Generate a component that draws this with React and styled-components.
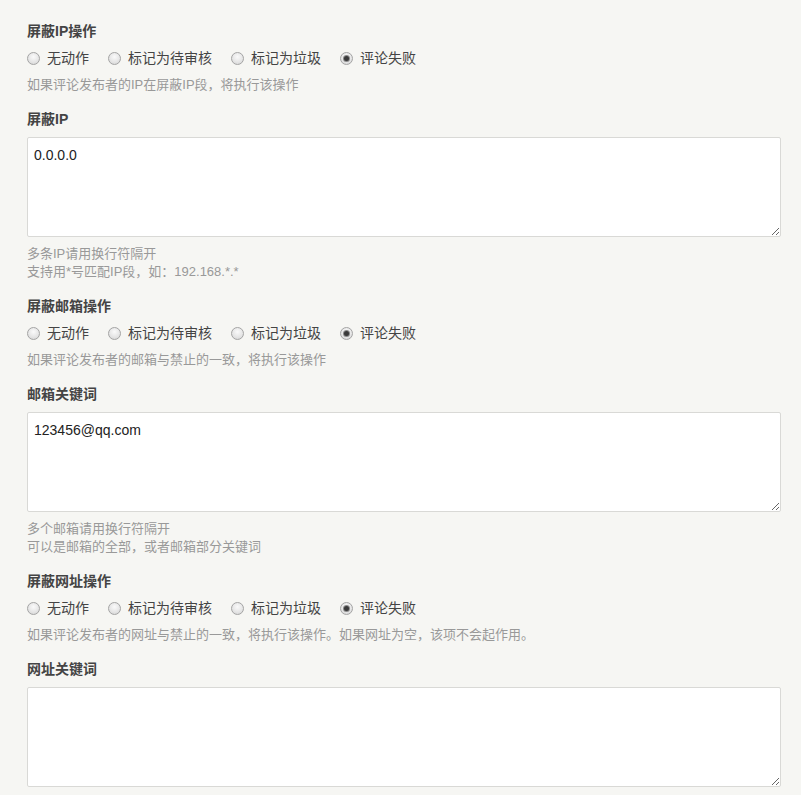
import React from 'react'
import styled, { createGlobalStyle } from 'styled-components'

const GlobalStyle = createGlobalStyle`
  html, body {
    margin: 0;
    padding: 0;
    background: #f6f6f3;
  }
  body {
    font-family: "Liberation Sans", "Noto Sans CJK SC", sans-serif;
    font-size: 14px;
    color: #444;
  }
`

const Page = styled.div`
  padding: 21px 20px 0 27px;
  display: flex;
  flex-direction: column;
  gap: 15px;
`

const Option = styled.div`
  display: flex;
  flex-direction: column;
`

const Label = styled.label`
  display: block;
  font-weight: bold;
  font-size: 14px;
  line-height: 20px;
  color: #444;
  margin-bottom: ${props => (props.field ? '8px' : '7px')};
`

const RadioRow = styled.div`
  display: flex;
  align-items: center;
  height: 20px;
`

const RadioItem = styled.label`
  display: flex;
  align-items: center;
  margin-right: 19px;
  font-size: 14px;
  line-height: 20px;
  color: #444;
`

const RadioInput = styled.input.attrs({ type: 'radio' })`
  appearance: none;
  -webkit-appearance: none;
  width: 13px;
  height: 13px;
  margin: 0 7px 0 0;
  border-radius: 50%;
  border: 1px solid #a4a4a4;
  background: radial-gradient(circle at 50% 35%, #fafafa 0%, #e6e6e6 55%, #d2d2d2 100%);
  box-sizing: border-box;
  position: relative;
  &:checked::after {
    content: '';
    position: absolute;
    left: 3px;
    top: 3px;
    width: 5px;
    height: 5px;
    border-radius: 50%;
    background: #3a3a3a;
    box-shadow: 0 0 0 1px #8a8a8a;
  }
`

const Description = styled.p`
  margin: 8px 0 0;
  font-size: 13px;
  line-height: 18px;
  color: #999;
`

const TextArea = styled.textarea`
  display: block;
  width: 754px;
  height: 100px;
  box-sizing: border-box;
  padding: 7px 6px;
  margin: 0;
  border: 1px solid #d9d9d6;
  border-radius: 2px;
  background: #fff;
  font-family: "Liberation Sans", "Noto Sans CJK SC", sans-serif;
  font-size: 14px;
  line-height: 20px;
  color: #222;
  outline: none;
  resize: vertical;
`

const actions = ['无动作', '标记为待审核', '标记为垃圾', '评论失败']

function ActionOption({ name, title, description }) {
  return (
    <Option>
      <Label>{title}</Label>
      <RadioRow>
        {actions.map((a, i) => (
          <RadioItem key={a}>
            <RadioInput name={name} defaultChecked={i === 3} />
            {a}
          </RadioItem>
        ))}
      </RadioRow>
      <Description>{description}</Description>
    </Option>
  )
}

function FieldOption({ title, value, notes }) {
  return (
    <Option>
      <Label field>{title}</Label>
      <TextArea defaultValue={value} />
      {notes && (
        <Description>
          {notes.map((n, i) => (
            <React.Fragment key={i}>
              {i > 0 && <br />}
              {n}
            </React.Fragment>
          ))}
        </Description>
      )}
    </Option>
  )
}

export default function App() {
  return (
    <>
      <GlobalStyle />
      <Page>
        <ActionOption
          name="ip"
          title="屏蔽IP操作"
          description="如果评论发布者的IP在屏蔽IP段，将执行该操作"
        />
        <FieldOption
          title="屏蔽IP"
          value="0.0.0.0"
          notes={['多条IP请用换行符隔开', '支持用*号匹配IP段，如：192.168.*.*']}
        />
        <ActionOption
          name="mail"
          title="屏蔽邮箱操作"
          description="如果评论发布者的邮箱与禁止的一致，将执行该操作"
        />
        <FieldOption
          title="邮箱关键词"
          value="123456@qq.com"
          notes={['多个邮箱请用换行符隔开', '可以是邮箱的全部，或者邮箱部分关键词']}
        />
        <ActionOption
          name="url"
          title="屏蔽网址操作"
          description="如果评论发布者的网址与禁止的一致，将执行该操作。如果网址为空，该项不会起作用。"
        />
        <FieldOption title="网址关键词" value="" />
      </Page>
    </>
  )
}
